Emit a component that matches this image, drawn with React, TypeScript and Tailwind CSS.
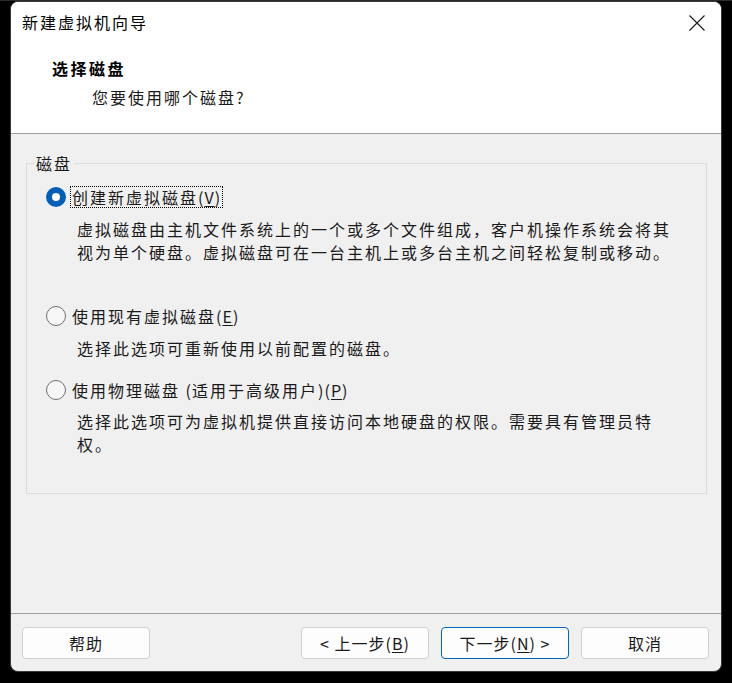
import React from "react";

const font = { fontFamily: '"Noto Sans CJK SC", "Noto Sans", sans-serif' };

function Radio({ checked }: { checked?: boolean }) {
  if (checked) {
    return (
      <div className="w-[20px] h-[20px] rounded-full bg-[#005fb8] flex items-center justify-center shrink-0">
        <div className="w-[8px] h-[8px] rounded-full bg-white" />
      </div>
    );
  }
  return <div className="w-[20px] h-[20px] rounded-full border border-[#707070] bg-[#f7f7f7] shrink-0" />;
}

function Key({ k }: { k: string }) {
  return (
    <span className="tracking-[1px]">
      (<span className="underline underline-offset-2">{k}</span>)
    </span>
  );
}

function Btn({ children, primary }: { children: React.ReactNode; primary?: boolean }) {
  return (
    <div
      className={
        "w-[128px] h-[32px] rounded-[4px] bg-[#fdfdfd] flex items-center justify-center text-[16px] tracking-[1px] text-[#1a1a1a] border whitespace-pre " +
        (primary ? "border-[#0067c0]" : "border-[#d0d0d0]")
      }
    >
      {children}
    </div>
  );
}

export default function App() {
  return (
    <div className="w-[732px] h-[683px] bg-black pt-[1px] pl-[10px] border-t border-[#2b2b2b]" style={font}>
      <div className="w-[712px] h-[671px] -mt-[1px] rounded-[8px] border border-[#3a3a3a] overflow-hidden flex flex-col bg-[#f0f0f0]">
        {/* header */}
        <div className="h-[132px] bg-white border-b border-[#a0a0a0] shrink-0 flex flex-col">
          <div className="h-[40px] flex items-center justify-between pl-[11px] pr-[16px]">
            <span className="text-[16px] tracking-[2px] text-black leading-[22px]">新建虚拟机向导</span>
            <svg width="16" height="16" viewBox="0 0 16 16" className="mt-[1px]">
              <path d="M0.5 0.5 L15.5 15.5 M15.5 0.5 L0.5 15.5" stroke="#1a1a1a" strokeWidth="1.1" fill="none" />
            </svg>
          </div>
          <div className="mt-[15px] pl-[41px] text-[16px] tracking-[2.5px] font-bold leading-[22px] text-black">选择磁盘</div>
          <div className="mt-[7px] pl-[81px] text-[16px] tracking-[2px] leading-[22px] text-[#1a1a1a]">
            您要使用哪个磁盘<span className="tracking-normal">?</span>
          </div>
        </div>

        {/* body */}
        <div className="flex-1 pl-[15px] pt-[29px]">
          <div className="relative w-[681px] h-[331px] border border-[#dcdcdc] pl-[19px] pt-[22px]">
            <div className="absolute -top-[12px] left-[7px] px-[2px] bg-[#f0f0f0] text-[16px] tracking-[2px] leading-[22px] text-[#1a1a1a]">
              磁盘
            </div>

            <div className="flex items-center h-[22px]">
              <Radio checked />
              <div className="ml-[4px] h-[22px] border border-dotted border-black px-[1px] flex items-center text-[16px] tracking-[2px] leading-[20px] text-[#1a1a1a]">
                <span>
                  创建新虚拟磁盘<Key k="V" />
                </span>
              </div>
            </div>
            <div className="mt-[10px] ml-[31px] w-[600px] text-[16px] tracking-[2px] leading-[23px] text-[#1a1a1a]">
              虚拟磁盘由主机文件系统上的一个或多个文件组成，客户机操作系统会将其视为单个硬盘。虚拟磁盘可在一台主机上或多台主机之间轻松复制或移动。
            </div>

            <div className="mt-[41px] flex items-center h-[22px]">
              <Radio />
              <span className="ml-[6px] text-[16px] tracking-[2px] leading-[22px] text-[#1a1a1a]">
                使用现有虚拟磁盘<Key k="E" />
              </span>
            </div>
            <div className="mt-[10px] ml-[31px] w-[600px] text-[16px] tracking-[2px] leading-[23px] text-[#1a1a1a]">
              选择此选项可重新使用以前配置的磁盘。
            </div>

            <div className="mt-[19px] flex items-center h-[22px]">
              <Radio />
              <span className="ml-[6px] text-[16px] tracking-[2px] leading-[22px] text-[#1a1a1a]">
                使用物理磁盘 <span className="tracking-[1px]">(</span>适用于高级用户<span className="tracking-[1px]">)</span>
                <Key k="P" />
              </span>
            </div>
            <div className="mt-[9px] ml-[31px] w-[600px] text-[16px] tracking-[2px] leading-[23px] text-[#1a1a1a]">
              选择此选项可为虚拟机提供直接访问本地硬盘的权限。需要具有管理员特权。
            </div>
          </div>
        </div>

        {/* footer */}
        <div className="h-[58px] shrink-0 border-t border-[#a0a0a0] flex items-start justify-between pt-[13px] pl-[11px] pr-[12px]">
          <Btn>帮助</Btn>
          <div className="flex gap-[12px]">
            <Btn>
              {"< 上一步"}
              <Key k="B" />
            </Btn>
            <Btn primary>
              {"下一步"}
              <Key k="N" />
              {" >"}
            </Btn>
            <Btn>取消</Btn>
          </div>
        </div>
      </div>
    </div>
  );
}
